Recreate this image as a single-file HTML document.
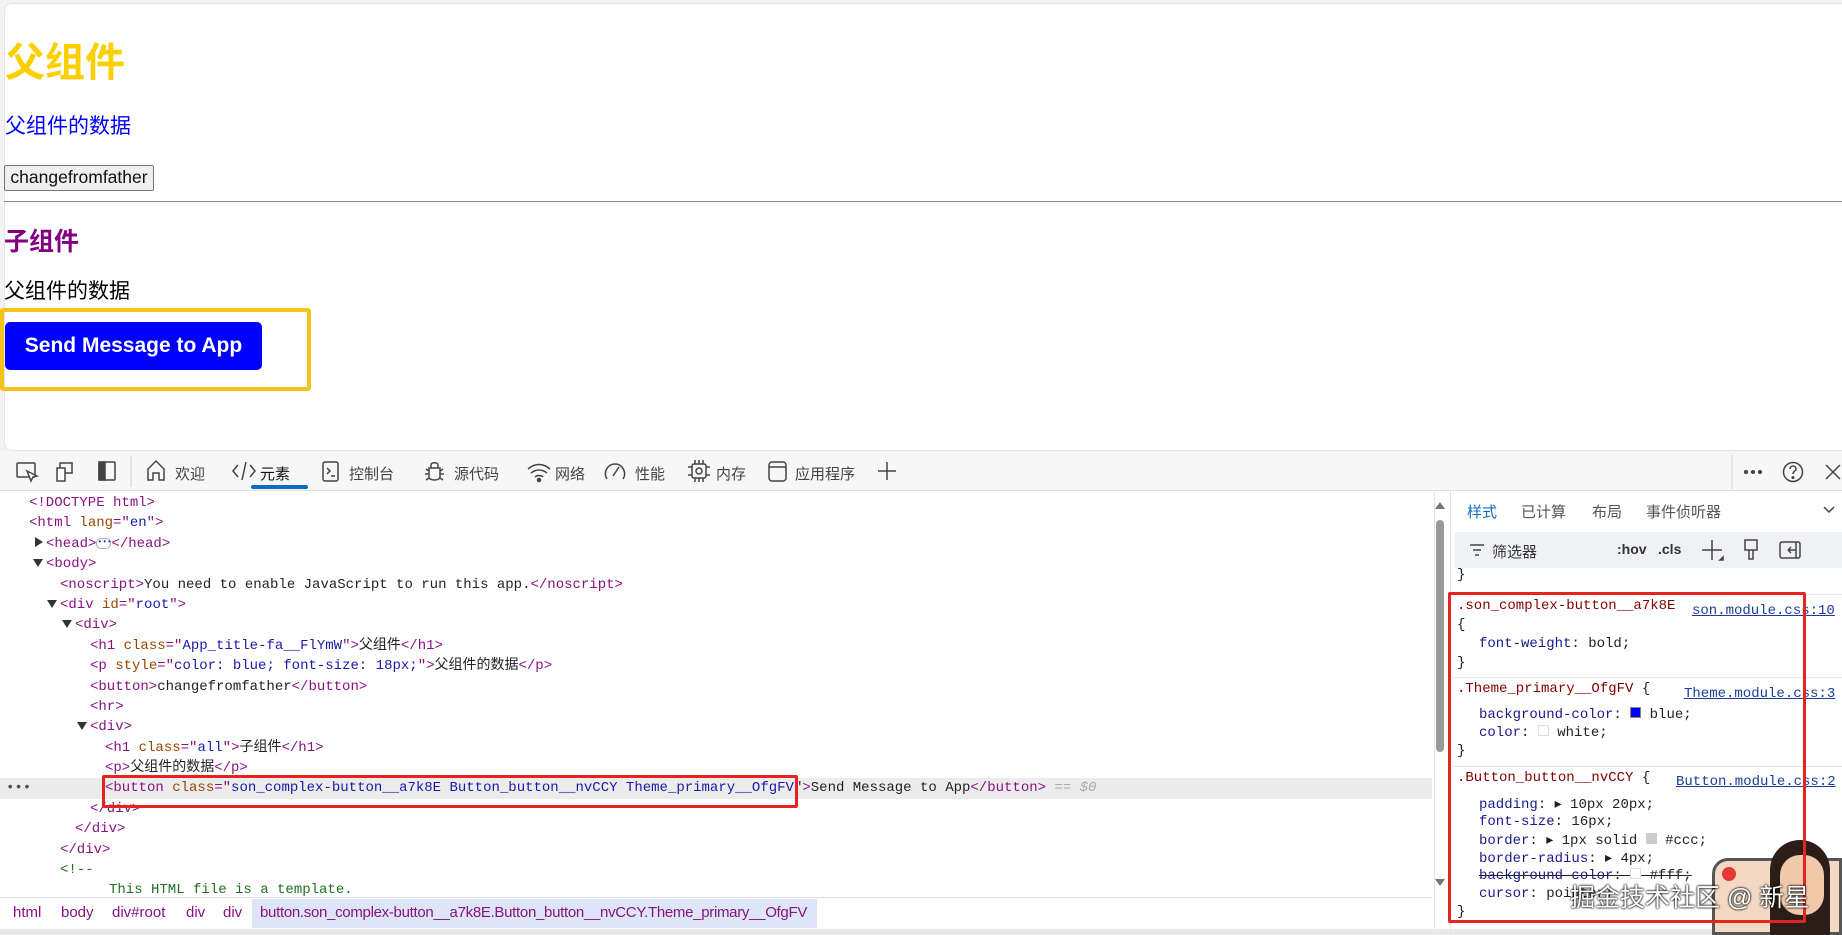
<!DOCTYPE html>
<html><head><meta charset="utf-8">
<style>
*{margin:0;padding:0;box-sizing:border-box}
html,body{width:1842px;height:935px;overflow:hidden}
body{background:#f3f3f3;position:relative;font-family:"Liberation Sans","Noto Sans CJK SC",sans-serif}
.abs{position:absolute}
#page{left:4px;top:3px;width:1850px;height:448px;background:#fff;border:1px solid #e4e4e4;border-radius:8px 0 0 8px}
.cjk{font-family:"Liberation Sans","Noto Sans CJK SC",sans-serif}
#dev{left:0;top:451px;width:1842px;height:484px;background:#fff}
.tb{top:451px;height:40px;width:1842px;left:0;background:#f7f7f7;border-bottom:1px solid #e0e0e0}
.tab{position:absolute;top:463px;font-size:15px;color:#444}
.code{position:absolute;left:0;top:493px;width:1432px;height:404px;overflow:hidden;font-family:"Liberation Mono","Noto Sans CJK SC",monospace;font-size:14px;line-height:20.4px;color:#222}
.code div{height:20.4px;position:relative;white-space:pre}
.t{color:#881280}.a{color:#994500}.v{color:#1a1aa6}.c{color:#236e25}
.tri{display:inline-block;width:0;height:0;border-left:5px solid transparent;border-right:5px solid transparent;border-top:8px solid #333;margin-right:3px}
.trir{display:inline-block;width:0;height:0;border-top:5px solid transparent;border-bottom:5px solid transparent;border-left:8px solid #333;margin-right:3px}
.sty{position:absolute;font-family:"Liberation Mono",monospace;font-size:14px;color:#222;white-space:pre}
.p{color:#1a1a8a}
.lnk{color:#1a3d9a;text-decoration:underline}
.bc{position:absolute;top:904px;font-size:15px;color:#881280;white-space:pre}
</style></head><body>
<div id="page" class="abs"></div>
<div class="abs cjk" style="left:5px;top:30px;font-size:40px;font-weight:bold;color:#fcd000">父组件</div>
<div class="abs cjk" style="left:5px;top:110px;font-size:21px;color:#0000ff">父组件的数据</div>
<div class="abs" style="left:4px;top:165px;width:150px;height:26px;border:1px solid #767676;border-radius:2px;background:#efefef;font-size:17.5px;color:#111;text-align:center;line-height:23px">changefromfather</div>
<div class="abs" style="left:4px;top:201px;width:1840px;height:1px;background:#8a8a8a"></div>
<div class="abs cjk" style="left:4px;top:222px;font-size:25px;font-weight:bold;color:#800080">子组件</div>
<div class="abs cjk" style="left:4px;top:275px;font-size:21px;color:#000">父组件的数据</div>
<div class="abs" style="left:0;top:308px;width:311px;height:83px;border:4px solid #f7c21a;border-radius:3px"></div>
<div class="abs" style="left:5px;top:322px;width:257px;height:48px;background:#0000ff;border-radius:5px;color:#fff;font-weight:bold;font-size:21px;text-align:center;line-height:48px">Send Message to App</div>

<div id="dev" class="abs"></div>
<div class="abs tb"></div>
<svg class="abs" style="left:0;top:451px" width="1842" height="40" fill="none" stroke="#444" stroke-width="1.5">
<rect x="17" y="12" width="18" height="14" rx="1"/><path d="M27 20l4 10 2-4 4-1z" fill="#fff"/>
<rect x="60" y="12" width="12" height="10"/><rect x="57" y="17" width="8" height="13" fill="#fff"/>
<rect x="99" y="11" width="16" height="18" rx="1"/><rect x="99" y="11" width="6" height="18" fill="#444"/>
<line x1="131" y1="5" x2="131" y2="36" stroke="#ddd"/>
<path d="M148 29V18l8-8 8 8v11h-5v-7h-6v7z"/>
<path d="M238 14l-5 6 5 6M246 11l-4 18M250 14l5 6-5 6"/>
<rect x="323" y="11" width="15" height="19" rx="2"/><path d="M327 17l3 3-3 3M331 25h4"/>
<path d="M431 14c0-3 7-3 7 0v3h-7zM429 17h11v9c0 4-11 4-11 0zM426 18l3 2M443 18l-3 2M425 23h4M440 23h4M426 29l3-2M443 29l-3-2"/>
<path d="M528 18c7-6 15-6 22 0M531 22c5-4 11-4 16 0M535 26c2-2 6-2 8 0"/><circle cx="539" cy="29" r="1.5" fill="#444"/>
<path d="M607 28c-4-6 0-15 8-15s12 9 8 15M613 25l6-9"/>
<rect x="692" y="13" width="14" height="14" rx="2"/><circle cx="699" cy="20" r="3"/><path d="M695 9v4M699 9v4M703 9v4M695 27v4M699 27v4M703 27v4M688 16h4M688 24h4M706 16h4M706 24h4"/>
<rect x="769" y="11" width="17" height="19" rx="3"/><path d="M769 16h17"/>
<path d="M887 11v18M878 20h18"/>
<line x1="1732" y1="4" x2="1732" y2="38" stroke="#ddd"/>
<circle cx="1746" cy="21" r="1.3" fill="#444"/><circle cx="1753" cy="21" r="1.3" fill="#444"/><circle cx="1760" cy="21" r="1.3" fill="#444"/>
<circle cx="1793" cy="21" r="9.5"/><path d="M1790 18c0-4 6-4 6 0 0 2-3 2-3 5" /><circle cx="1793" cy="26.5" r="0.8" fill="#444"/>
<path d="M1826 14l14 14M1840 14l-14 14"/>
</svg>
<div class="tab" style="left:175px">欢迎</div>
<div class="tab" style="left:260px;color:#111">元素</div>
<div class="abs" style="left:251px;top:485px;width:57px;height:4px;background:#0f6cbd;border-radius:2px"></div>
<div class="tab" style="left:349px">控制台</div>
<div class="tab" style="left:454px">源代码</div>
<div class="tab" style="left:555px">网络</div>
<div class="tab" style="left:635px">性能</div>
<div class="tab" style="left:716px">内存</div>
<div class="tab" style="left:795px">应用程序</div>

<div class="abs" style="left:0;top:778px;width:1432px;height:21px;background:#ececec"></div>
<div class="code"><div style="padding-left:29px"><span class="t">&lt;!DOCTYPE html&gt;</span></div><div style="padding-left:29px"><span class="t">&lt;html</span> <span class="a">lang</span><span class="t">="</span><span class="v">en</span><span class="t">"&gt;</span></div><div style="padding-left:35px"><span class="trir"></span><span class="t">&lt;head&gt;</span><span style="display:inline-block;width:15px;height:11px;border:1px solid #aac;border-radius:5px;font-size:8px;line-height:8px;color:#33a;text-align:center;vertical-align:middle">•••</span><span class="t">&lt;/head&gt;</span></div><div style="padding-left:33px"><span class="tri"></span><span class="t">&lt;body&gt;</span></div><div style="padding-left:60px"><span class="t">&lt;noscript&gt;</span>You need to enable JavaScript to run this app.<span class="t">&lt;/noscript&gt;</span></div><div style="padding-left:47px"><span class="tri"></span><span class="t">&lt;div</span> <span class="a">id</span><span class="t">="</span><span class="v">root</span><span class="t">"&gt;</span></div><div style="padding-left:62px"><span class="tri"></span><span class="t">&lt;div&gt;</span></div><div style="padding-left:90px"><span class="t">&lt;h1</span> <span class="a">class</span><span class="t">="</span><span class="v">App_title-fa__FlYmW</span><span class="t">"&gt;</span>父组件<span class="t">&lt;/h1&gt;</span></div><div style="padding-left:90px"><span class="t">&lt;p</span> <span class="a">style</span><span class="t">="</span><span class="v">color: blue; font-size: 18px;</span><span class="t">"&gt;</span>父组件的数据<span class="t">&lt;/p&gt;</span></div><div style="padding-left:90px"><span class="t">&lt;button&gt;</span>changefromfather<span class="t">&lt;/button&gt;</span></div><div style="padding-left:90px"><span class="t">&lt;hr&gt;</span></div><div style="padding-left:77px"><span class="tri"></span><span class="t">&lt;div&gt;</span></div><div style="padding-left:105px"><span class="t">&lt;h1</span> <span class="a">class</span><span class="t">="</span><span class="v">all</span><span class="t">"&gt;</span>子组件<span class="t">&lt;/h1&gt;</span></div><div style="padding-left:105px"><span class="t">&lt;p&gt;</span>父组件的数据<span class="t">&lt;/p&gt;</span></div><div style="padding-left:105px"><span style="position:absolute;left:6px;color:#555">•••</span><span class="t">&lt;button</span> <span class="a">class</span><span class="t">="</span><span class="v">son_complex-button__a7k8E Button_button__nvCCY Theme_primary__OfgFV</span><span class="t">"&gt;</span>Send Message to App<span class="t">&lt;/button&gt;</span> <span style="color:#aaa;font-style:italic">== $0</span></div><div style="padding-left:90px"><span class="t">&lt;/div&gt;</span></div><div style="padding-left:75px"><span class="t">&lt;/div&gt;</span></div><div style="padding-left:60px"><span class="t">&lt;/div&gt;</span></div><div style="padding-left:60px"><span class="c">&lt;!--</span></div><div style="padding-left:109px"><span class="c">This HTML file is a template.</span></div></div>
<div class="abs" style="left:102px;top:775px;width:696px;height:33px;border:3px solid #e52420;border-radius:2px"></div>
<div class="abs" style="left:0;top:897px;width:1432px;height:32px;background:#fff;border-top:1px solid #e0e0e0"></div>
<div class="abs" style="left:252px;top:899px;width:565px;height:29px;background:#dde6f7"></div>
<div class="bc" style="left:13px">html</div>
<div class="bc" style="left:61px">body</div>
<div class="bc" style="left:112px">div#root</div>
<div class="bc" style="left:186px">div</div>
<div class="bc" style="left:223px">div</div>
<div class="bc" style="left:260px;letter-spacing:-0.3px">button.son_complex-button__a7k8E.Button_button__nvCCY.Theme_primary__OfgFV</div>
<div class="abs" style="left:0;top:929px;width:1842px;height:6px;background:#e8e8e8"></div>
<div class="abs" style="left:1434px;top:491px;width:1px;height:438px;background:#e6e6e6"></div>
<svg class="abs" style="left:1433px;top:498px" width="14" height="400"><path d="M2 11l5-7 5 7z" fill="#777"/><rect x="3" y="22" width="8" height="232" rx="4" fill="#999"/><path d="M2 381l5 7 5-7z" fill="#777"/></svg>
<div class="abs" style="left:1450px;top:491px;width:1px;height:438px;background:#e0e0e0"></div>
<div class="abs" style="left:1467px;top:501px;font-size:15px;color:#0f6cbd">样式</div>
<div class="abs" style="left:1521px;top:501px;font-size:15px;color:#555">已计算</div>
<div class="abs" style="left:1592px;top:501px;font-size:15px;color:#555">布局</div>
<div class="abs" style="left:1646px;top:501px;font-size:15px;color:#555">事件侦听器</div>
<svg class="abs" style="left:1822px;top:505px" width="14" height="10"><path d="M2 2l5 5 5-5" stroke="#444" stroke-width="1.5" fill="none"/></svg>
<div class="abs" style="left:1455px;top:532px;width:387px;height:36px;background:#f0f1f4"></div>
<svg class="abs" style="left:1468px;top:542px" width="20" height="16"><path d="M2 3h14M5 8h8M7 13h4" stroke="#444" stroke-width="1.5"/></svg>
<div class="abs" style="left:1492px;top:541px;font-size:15px;color:#333">筛选器</div>
<div class="abs" style="left:1617px;top:541px;font-size:14px;color:#333;font-weight:bold">:hov</div>
<div class="abs" style="left:1658px;top:541px;font-size:14px;color:#333;font-weight:bold">.cls</div>
<svg class="abs" style="left:1700px;top:538px" width="110" height="24" fill="none" stroke="#444" stroke-width="1.5"><path d="M12 2v20M2 12h20"/><path d="M20 22l3-3v3z" fill="#444"/><path d="M45 2h12v10h-12zM49 12v9h4v-9"/><rect x="80" y="4" width="20" height="16" rx="2"/><path d="M88 12h8M88 12l3-3M88 12l3 3M96 4v16"/></svg>
<div class="sty" style="left:1457px;top:567px">}</div>
<div class="abs" style="left:1452px;top:594px;width:390px;height:1px;background:#e8e8e8"></div>
<div class="sty" style="left:1457px;top:598px;color:#800000">.son_complex-button__a7k8E</div>
<div class="sty lnk" style="left:1692px;top:603px">son.module.css:10</div>
<div class="sty" style="left:1457px;top:617px">{</div>
<div class="sty" style="left:1479px;top:636px"><span class="p">font-weight</span>: bold;</div>
<div class="sty" style="left:1457px;top:655px">}</div>
<div class="abs" style="left:1452px;top:677px;width:390px;height:1px;background:#e8e8e8"></div>
<div class="sty" style="left:1457px;top:681px"><span style="color:#800000">.Theme_primary__OfgFV</span> {</div>
<div class="sty lnk" style="left:1684px;top:686px">Theme.module.css:3</div>
<div class="sty" style="left:1479px;top:707px"><span class="p">background-color</span>: <span style="display:inline-block;width:11px;height:11px;background:#00f;border:1px solid #888"></span> blue;</div>
<div class="sty" style="left:1479px;top:725px"><span class="p">color</span>: <span style="display:inline-block;width:11px;height:11px;background:#fff;border:1px solid #ddd"></span> white;</div>
<div class="sty" style="left:1457px;top:743px">}</div>
<div class="abs" style="left:1452px;top:766px;width:390px;height:1px;background:#e8e8e8"></div>
<div class="sty" style="left:1457px;top:770px"><span style="color:#800000">.Button_button__nvCCY</span> {</div>
<div class="sty lnk" style="left:1676px;top:774px">Button.module.css:2</div>
<div class="sty" style="left:1479px;top:796px"><span class="p">padding</span>: ▸ 10px 20px;</div>
<div class="sty" style="left:1479px;top:814px"><span class="p">font-size</span>: 16px;</div>
<div class="sty" style="left:1479px;top:832px"><span class="p">border</span>: ▸ 1px solid <span style="display:inline-block;width:11px;height:11px;background:#ccc"></span> #ccc;</div>
<div class="sty" style="left:1479px;top:850px"><span class="p">border-radius</span>: ▸ 4px;</div>
<div class="sty" style="left:1479px;top:868px;text-decoration:line-through"><span class="p">background-color</span>: <span style="display:inline-block;width:11px;height:11px;border:1px solid #ddd"></span> #fff;</div>
<div class="sty" style="left:1479px;top:886px"><span class="p">cursor</span>: pointer;</div>
<div class="sty" style="left:1457px;top:904px">}</div>
<div class="abs" style="left:1712px;top:858px;width:130px;height:77px;background:#f3d9c4;border-radius:16px 0 0 0;border:3px solid #555"></div>
<div class="abs" style="left:1770px;top:840px;width:60px;height:95px;background:#2b1d18;border-radius:30px 30px 0 0"></div>
<div class="abs" style="left:1780px;top:855px;width:44px;height:60px;background:#f0c8aa;border-radius:20px"></div>
<div class="abs" style="left:1722px;top:867px;width:14px;height:14px;background:#e53935;border-radius:50%"></div>
<div class="abs" style="left:1448px;top:592px;width:358px;height:331px;border:3px solid #e52420;border-radius:2px"></div>
<div class="abs cjk" style="left:1570px;top:878px;font-size:25px;color:#fff;text-shadow:0 0 2px #000,0 0 2px #000">掘金技术社区 @ 新星</div>
</body></html>
